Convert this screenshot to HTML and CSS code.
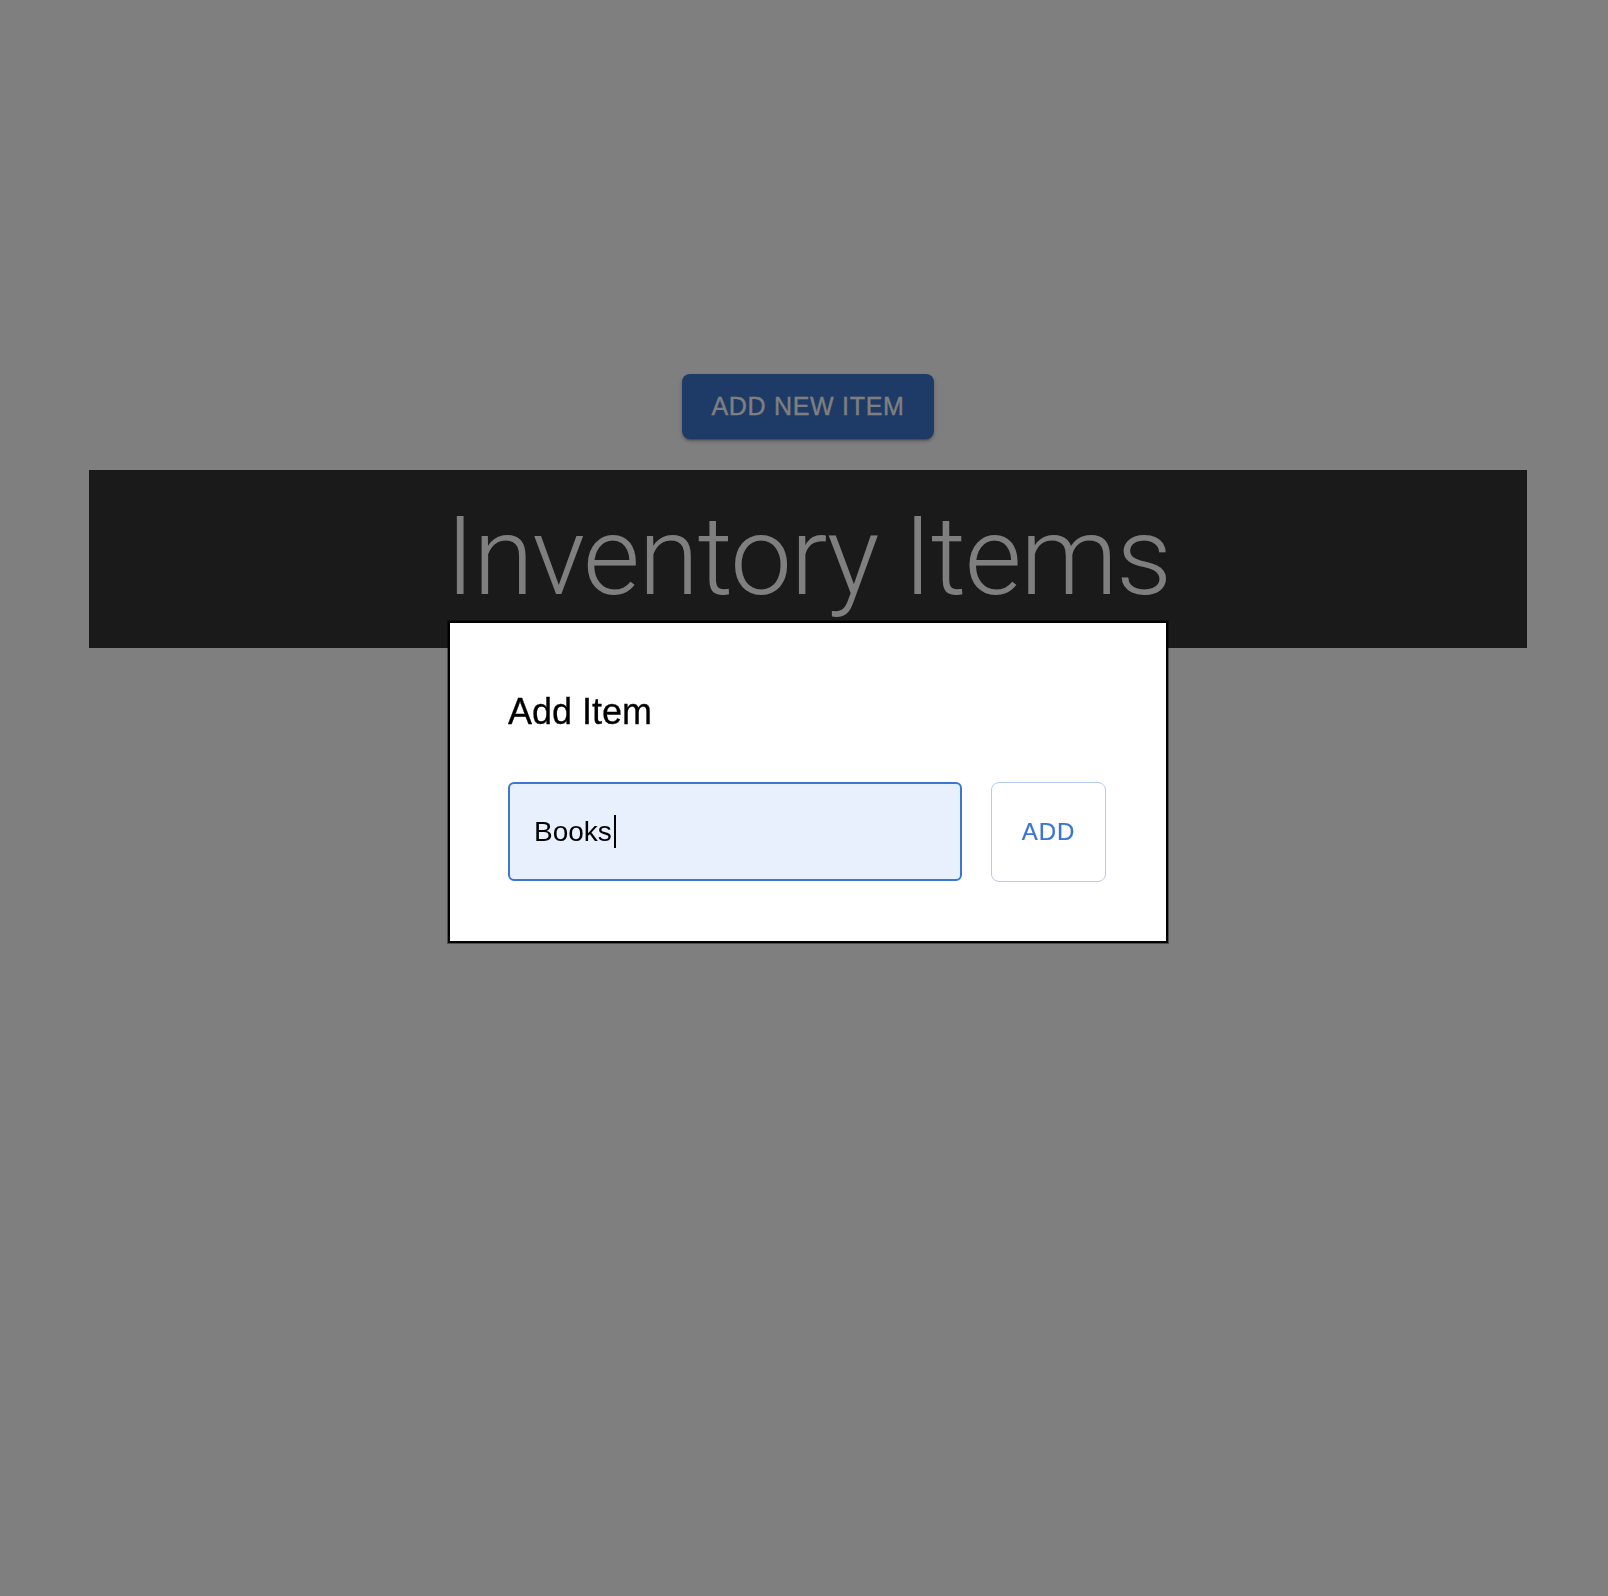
FILE: index.html
```html
<!DOCTYPE html>
<html lang="en">
<head>
<meta charset="utf-8">
<title>Inventory Items</title>
<link rel="stylesheet" href="styles.css">
</head>
<body>
<div class="page">
  <button class="add-new" type="button">Add New Item</button>
  <header class="band"><h1 class="title">Inventory Items</h1></header>
</div>
<div class="backdrop">
  <div class="modal" role="dialog" aria-label="Add Item">
    <h2 class="modal-title">Add Item</h2>
    <form class="modal-row">
      <label class="field-wrap">
        <input class="field" type="text" value="Books" autofocus>
        <span class="caret"></span>
      </label>
      <button class="add" type="button">Add</button>
    </form>
  </div>
</div>
</body>
</html>
```
FILE: styles.css
```css
html, body {
  margin: 0;
  padding: 0;
  background: #ffffff;
}
body {
  font-family: "Liberation Sans", Arial, sans-serif;
}
.page {
  display: flex;
  flex-direction: column;
  align-items: center;
  padding-top: 374px;
  padding-left: 8px;
}
.add-new {
  width: 252px;
  height: 65px;
  border: none;
  border-radius: 8px;
  background: #3c74cc;
  color: #ffffff;
  font-family: "Liberation Sans", Arial, sans-serif;
  font-weight: 400;
  font-size: 25px;
  letter-spacing: 0.7px;
  text-transform: uppercase;
  -webkit-text-stroke: 0.3px #ffffff;
  box-shadow: 0 3px 2px -2px rgba(0,0,0,0.35), 0 2px 4px rgba(0,0,0,0.25);
  margin-bottom: 31px;
  padding: 0;
}
.band {
  align-self: stretch;
  margin: 0 81px 0 81px;
  height: 178px;
  background: #343434;
  display: flex;
  justify-content: center;
}
.title {
  margin: 0;
  padding-top: 22px;
  font-family: Roboto, "Liberation Sans", sans-serif;
  font-weight: 300;
  font-size: 110px;
  letter-spacing: -1.5px;
  line-height: 130px;
  color: #ffffff;
}
.backdrop {
  position: fixed;
  inset: 0;
  background: rgba(0,0,0,0.5);
  display: flex;
  justify-content: center;
  align-items: flex-start;
  padding-top: 621px;
  padding-left: 8px;
}
.modal {
  box-sizing: border-box;
  width: 720px;
  height: 322px;
  background: #ffffff;
  border: 2px solid #000000;
  box-shadow: 0 0 0 1px rgba(0,0,0,0.4);
  padding: 58px;
}
.modal-title {
  margin: 10px 0 50px;
  font-family: "Liberation Sans", Arial, sans-serif;
  font-weight: 400;
  font-size: 36px;
  line-height: 41px;
  color: #000000;
  -webkit-text-stroke: 0.3px #000000;
}
.modal-row {
  display: flex;
  gap: 29px;
  margin: 0;
}
.field-wrap {
  position: relative;
  display: block;
}
.field {
  box-sizing: border-box;
  display: block;
  width: 454px;
  height: 99px;
  border: 2px solid #3a78d2;
  border-radius: 6px;
  background: #e8f0fe;
  padding: 0 24px;
  font-family: "Liberation Sans", Arial, sans-serif;
  font-size: 28px;
  color: #000000;
  caret-color: transparent;
  outline: none;
}
.caret {
  position: absolute;
  left: 106px;
  top: 33px;
  width: 1.5px;
  height: 33px;
  background: #000000;
}
.add {
  box-sizing: border-box;
  width: 115px;
  height: 100px;
  border: 1px solid #b3ccf0;
  border-radius: 8px;
  background: #ffffff;
  color: #3a74d0;
  font-family: "Liberation Sans", Arial, sans-serif;
  font-weight: 400;
  font-size: 24px;
  letter-spacing: 1px;
  text-transform: uppercase;
  -webkit-text-stroke: 0.2px #3a74d0;
  padding: 0;
}
```
